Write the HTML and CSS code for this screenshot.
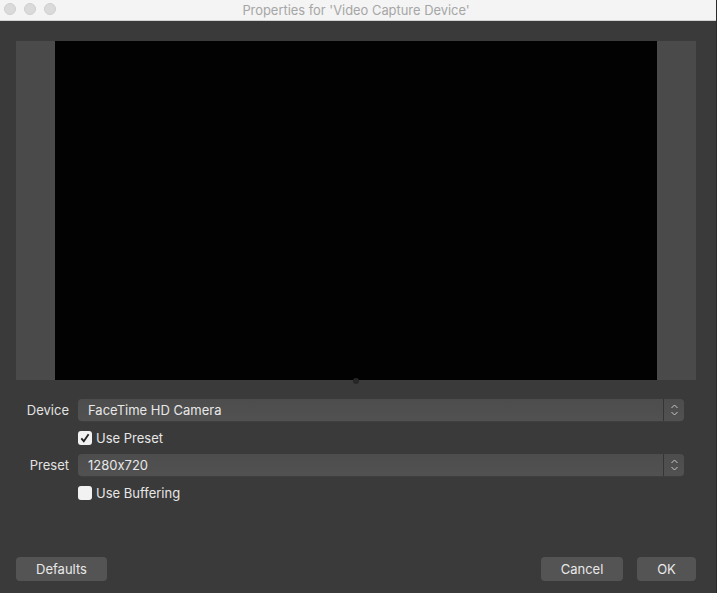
FILE: index.html
```html
<!DOCTYPE html>
<html>
<head>
<meta charset="utf-8">
<link rel="stylesheet" href="styles.css">
</head>
<body>
<div class="window">
  <div class="titlebar">
    <div class="lights"><span class="light"></span><span class="light"></span><span class="light"></span></div>
    <div class="title">Properties for 'Video Capture Device'</div>
  </div>
  <div class="content">
    <div class="preview">
      <div class="video"></div>
      <div class="handle"></div>
    </div>
    <div class="form">
      <div class="row">
        <div class="label">Device</div>
        <div class="combo">
          <div class="combo-text">FaceTime HD Camera</div>
          <div class="stepper"><svg width="9" height="14" viewBox="0 0 9 14"><path d="M1.5 5 L4.5 2 L7.5 5 M1.5 9 L4.5 12 L7.5 9" fill="none" stroke="#c8c8c8" stroke-width="1"/></svg></div>
        </div>
      </div>
      <div class="row check-row">
        <div class="label"></div>
        <div class="check"><span class="box checked"><svg width="14" height="14" viewBox="0 0 14 14"><path d="M3.3 7.3 L5.8 10.2 L10.6 3.2" fill="none" stroke="#222" stroke-width="1.8"/></svg></span>Use Preset</div>
      </div>
      <div class="row">
        <div class="label">Preset</div>
        <div class="combo">
          <div class="combo-text">1280x720</div>
          <div class="stepper"><svg width="9" height="14" viewBox="0 0 9 14"><path d="M1.5 5 L4.5 2 L7.5 5 M1.5 9 L4.5 12 L7.5 9" fill="none" stroke="#c8c8c8" stroke-width="1"/></svg></div>
        </div>
      </div>
      <div class="row check-row">
        <div class="label"></div>
        <div class="check"><span class="box"></span>Use Buffering</div>
      </div>
    </div>
    <div class="buttons">
      <button class="btn defaults">Defaults</button>
      <div class="spacer"></div>
      <button class="btn cancel">Cancel</button>
      <button class="btn ok">OK</button>
    </div>
  </div>
</div>
</body>
</html>
```
FILE: styles.css
```css
* { box-sizing: border-box; }
html, body { margin: 0; padding: 0; }
body {
  width: 717px;
  height: 593px;
  overflow: hidden;
  background: #3a3a3a;
  font-family: "Inter", "Liberation Sans", sans-serif;
  font-size: 13px;
  font-feature-settings: "calt" 0;
  color: #e6e6e6;
}
.window {
  width: 717px;
  height: 593px;
  display: flex;
  flex-direction: column;
  background: #3a3a3a;
  border-right: 1px solid #2a2a2a;
}
.titlebar {
  height: 21px;
  background: #f4f4f4;
  border-bottom: 1px solid #d2d2d2;
  position: relative;
  display: flex;
  align-items: center;
  justify-content: center;
}
.lights {
  position: absolute;
  left: 4px;
  top: 3px;
  display: flex;
  gap: 8px;
}
.light {
  width: 12px;
  height: 12px;
  border-radius: 50%;
  background: #dadada;
  border: 1px solid #cfcfcf;
}
.title {
  color: #a6a6a6;
  font-size: 12.9px;
  margin-top: 1px;
  margin-right: 4px;
}
.content {
  flex: 1;
  padding: 20px 20px 12px 16px;
  display: flex;
  flex-direction: column;
}
.preview {
  height: 339px;
  background: #4a4a4a;
  display: flex;
  justify-content: center;
  position: relative;
}
.video {
  width: 602px;
  height: 100%;
  background: #020202;
}
.handle {
  position: absolute;
  left: 337px;
  bottom: -4px;
  width: 6px;
  height: 6px;
  border-radius: 50%;
  background: #262626;
}
.form {
  margin-top: 19px;
  display: flex;
  flex-direction: column;
}
.row {
  display: flex;
  align-items: center;
  height: 22px;
}
.check-row {
  height: 33px;
}
.label {
  width: 62px;
  flex: none;
  text-align: right;
  padding-right: 9px;
  color: #e2e2e2;
}
.combo {
  width: 606px;
  height: 22px;
  border-radius: 4px;
  background: linear-gradient(#4d4d4d, #515151);
  display: flex;
  align-items: center;
  box-shadow: 0 0.5px 0 #454545;
}
.combo-text {
  flex: 1;
  padding-left: 10px;
  color: #e8e8e8;
}
.stepper {
  width: 21px;
  height: 22px;
  border-left: 1px solid #353535;
  display: flex;
  align-items: center;
  justify-content: center;
}
.check {
  display: flex;
  align-items: center;
  color: #e6e6e6;
}
.box {
  width: 14px;
  height: 14px;
  border-radius: 3px;
  background: #f2f2f2;
  margin-right: 4px;
  display: flex;
}
.buttons {
  margin-top: auto;
  display: flex;
  align-items: center;
}
.spacer { flex: 1; }
.btn {
  font-family: "Inter", "Liberation Sans", sans-serif;
  font-size: 13px;
  color: #e8e8e8;
  background: #545454;
  border: none;
  border-radius: 4px;
  height: 24px;
  padding: 0;
}
.defaults { width: 91px; }
.cancel { width: 82px; margin-right: 14px; }
.ok { width: 59px; }
```
